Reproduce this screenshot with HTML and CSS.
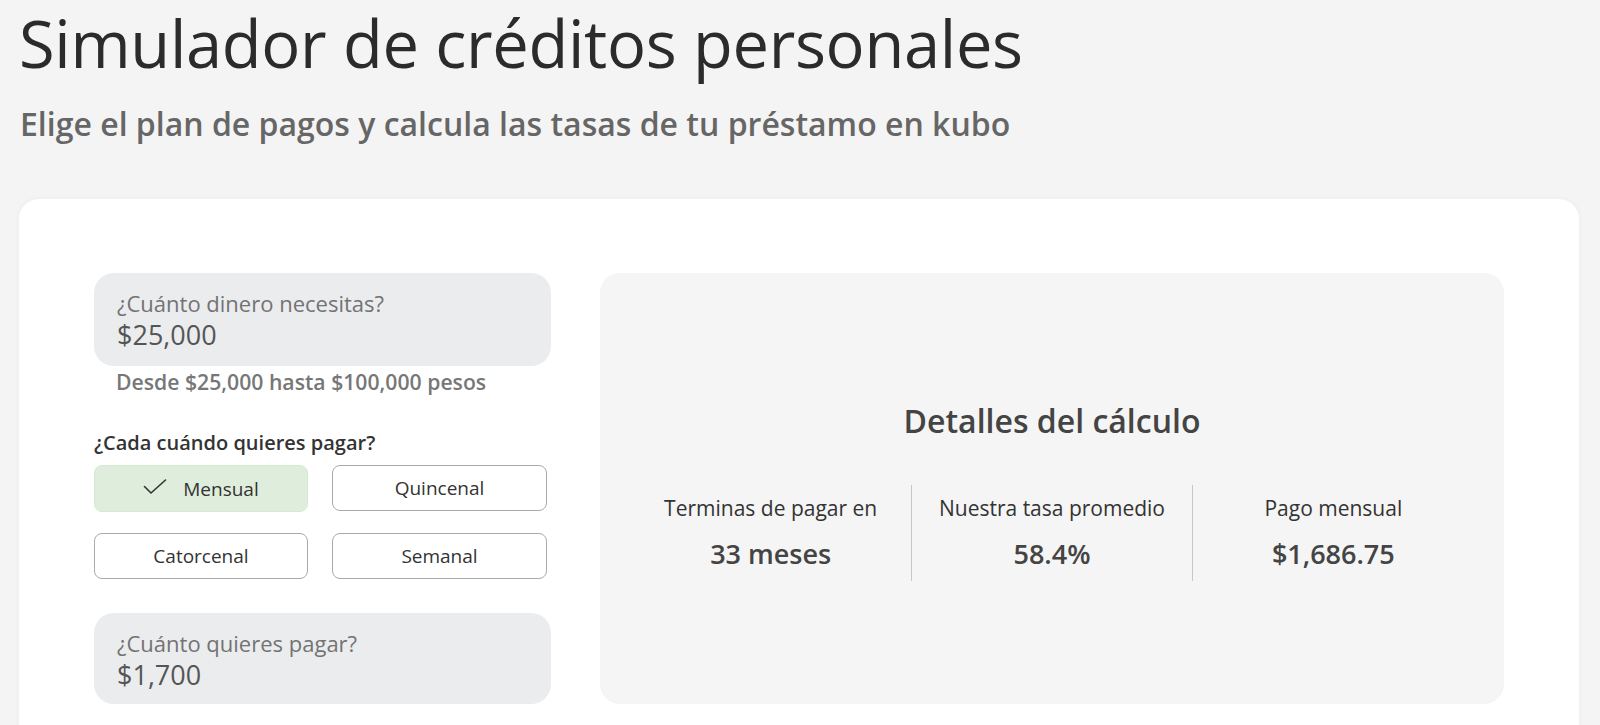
FILE: index.html
```html
<!DOCTYPE html>
<html lang="es">
<head>
<meta charset="utf-8">
<title>Simulador de créditos personales</title>
<link rel="stylesheet" href="styles.css">
</head>
<body>
<header class="header">
  <h1 class="title">Simulador de créditos personales</h1>
  <p class="subtitle">Elige el plan de pagos y calcula las tasas de tu préstamo en kubo</p>
</header>
<main class="card">
  <section class="form">
    <div class="field">
      <span class="field-label">¿Cuánto dinero necesitas?</span>
      <span class="field-value">$25,000</span>
    </div>
    <p class="helper">Desde $25,000 hasta $100,000 pesos</p>
    <p class="question">¿Cada cuándo quieres pagar?</p>
    <div class="options">
      <button class="option selected"><svg class="check" viewBox="0 0 24 16" width="24" height="16"><path d="M1.5 7.5 L8 14 L22.5 1" fill="none" stroke="#333" stroke-width="1.6" stroke-linecap="round" stroke-linejoin="round"/></svg>Mensual</button>
      <button class="option">Quincenal</button>
      <button class="option">Catorcenal</button>
      <button class="option">Semanal</button>
    </div>
    <div class="field field-pay">
      <span class="field-label">¿Cuánto quieres pagar?</span>
      <span class="field-value">$1,700</span>
    </div>
  </section>
  <section class="details">
    <h2 class="details-title">Detalles del cálculo</h2>
    <div class="stats">
      <div class="stat">
        <span class="stat-label">Terminas de pagar en</span>
        <span class="stat-value">33 meses</span>
      </div>
      <div class="stat">
        <span class="stat-label">Nuestra tasa promedio</span>
        <span class="stat-value">58.4%</span>
      </div>
      <div class="stat">
        <span class="stat-label">Pago mensual</span>
        <span class="stat-value">$1,686.75</span>
      </div>
    </div>
  </section>
</main>
</body>
</html>
```
FILE: styles.css
```css
* { box-sizing: border-box; }
html, body { margin: 0; padding: 0; }
body {
  background: #f4f4f4;
  font-family: "Open Sans", "Noto Sans", sans-serif;
  color: #333;
  height: 725px;
  overflow: hidden;
}
.header { padding: 0 0 0 19px; }
.title {
  margin: 0;
  padding-top: 2px;
  font-size: 65px;
  line-height: 82px;
  font-weight: 400;
  color: #2b2b2b;
  letter-spacing: -0.3px;
}
.subtitle {
  margin: 18px 0 0 1px;
  font-size: 32px;
  line-height: 44px;
  font-weight: 600;
  color: #666;
}
.card {
  margin: 53px 21px 0 19px;
  background: #fff;
  border-radius: 20px;
  box-shadow: 0 0 6px rgba(0,0,0,0.04);
  padding: 74px 75px 40px 75px;
  display: flex;
  gap: 49px;
  align-items: flex-start;
}
.form { width: 457px; flex: none; }
.field {
  background: #ebecee;
  border-radius: 20px;
  height: 93px;
  padding: 15px 23px 0;
  display: flex;
  flex-direction: column;
}
.field-label {
  font-size: 22px;
  line-height: 30px;
  color: #737373;
}
.field-value {
  font-size: 27px;
  line-height: 34px;
  color: #555;
}
.helper {
  margin: 2px 0 0 22px;
  font-size: 21.2px;
  line-height: 28px;
  font-weight: 600;
  color: #777;
}
.question {
  margin: 33px 0 0 0;
  font-size: 20px;
  line-height: 28px;
  font-weight: 600;
  color: #333;
}
.options {
  margin-top: 8px;
  display: grid;
  grid-template-columns: 214px 215px;
  column-gap: 24px;
  row-gap: 21px;
}
.option {
  height: 46px;
  border: 1.5px solid #aaa;
  border-radius: 8px;
  background: #fff;
  font-family: inherit;
  font-size: 19px;
  color: #333;
  display: flex;
  align-items: center;
  justify-content: center;
  padding: 0;
}
.option.selected {
  background: #dfeedc;
  border-color: #d6e9d3;
  height: 47px;
}
.check { margin-right: 16px; margin-top: -4px; }
.field-pay { margin-top: 34px; height: 91px; }
.details {
  width: 904px;
  flex: none;
  background: #f5f5f5;
  border-radius: 20px;
  height: 431px;
  display: flex;
  flex-direction: column;
  align-items: center;
  padding-top: 126px;
}
.details-title {
  margin: 0;
  font-size: 32px;
  line-height: 44px;
  font-weight: 600;
  color: #444;
}
.stats {
  margin-top: 42px;
  display: flex;
  width: 843px;
}
.stat {
  flex: 1;
  display: flex;
  flex-direction: column;
  align-items: center;
  padding: 9px 0 9px;
  gap: 14px;
}
.stat + .stat { border-left: 1.5px solid #c8c8c8; }
.stat-label {
  font-size: 21px;
  line-height: 28px;
  color: #333;
}
.stat-value {
  font-size: 27px;
  line-height: 36px;
  font-weight: 600;
  color: #444;
}
```
